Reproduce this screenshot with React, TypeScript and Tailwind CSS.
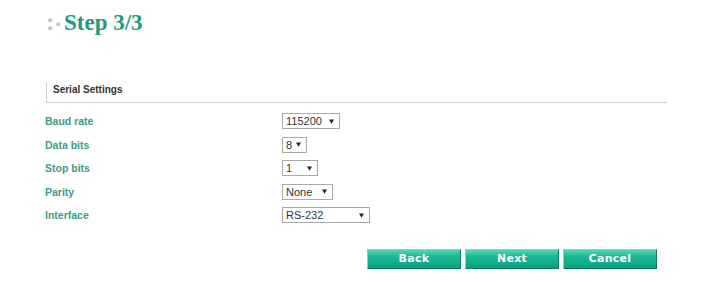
import React from "react";

const rows: { label: string; value: string; w: number }[] = [
  { label: "Baud rate", value: "115200", w: 58 },
  { label: "Data bits", value: "8", w: 25 },
  { label: "Stop bits", value: "1", w: 36 },
  { label: "Parity", value: "None", w: 51 },
  { label: "Interface", value: "RS-232", w: 88 },
];

function Select({ value, w }: { value: string; w: number }) {
  return (
    <div
      className="flex h-[16px] items-center justify-between border border-[#a9a9a9] bg-white pl-[3px] pr-[5px] text-[11px] leading-[14px] text-[#333]"
      style={{ width: w }}
    >
      <span>{value}</span>
      <svg width="5" height="5" viewBox="0 0 5 5" className="shrink-0">
        <polygon points="0,0.5 5,0.5 2.5,4.8" fill="#222" />
      </svg>
    </div>
  );
}

function Btn({ label }: { label: string }) {
  return (
    <button className="flex h-[20px] w-[94px] items-center justify-center border border-t-[#6fdcc4] border-l-[#6fdcc4] border-r-[#0a7a64] border-b-[#0a7a64] bg-[linear-gradient(#55d6b8_0%,#1bb994_35%,#12ad8a_70%,#0d9c7d_100%)] font-['DejaVu_Sans',sans-serif] text-[11px] font-bold tracking-[0.3px] text-white">
      {label}
    </button>
  );
}

export default function App() {
  return (
    <div className="h-[297px] w-[709px] bg-white font-['Liberation_Sans',Arial,sans-serif]">
      <div className="flex items-center pl-[48px] pt-[10px]">
        <svg width="13" height="13" viewBox="0 0 13 13" className="mt-[2px]">
          <circle cx="2.2" cy="2.2" r="2" fill="#c2c2c2" />
          <circle cx="2.2" cy="10.2" r="2" fill="#c2c2c2" />
          <circle cx="10.2" cy="6.2" r="2" fill="#c2c2c2" />
        </svg>
        <div className="ml-[3px] font-['Liberation_Serif',serif] text-[23px] font-bold leading-[26px] text-[#1e9a80]">
          Step 3/3
        </div>
      </div>

      <div className="ml-[46px] mr-[42px] mt-[46px] h-[21px] border-b border-l border-[#cccccc] pl-[6px] text-[10px] font-bold leading-[16px] text-[#333]">
        Serial Settings
      </div>

      <div className="mt-[6.5px] pl-[45px]">
        {rows.map((r) => (
          <div key={r.label} className="flex h-[23.5px] items-center">
            <div className="w-[237px] text-[10.5px] font-bold leading-[16px] text-[#3a9d86]">
              {r.label}
            </div>
            <Select value={r.value} w={r.w} />
          </div>
        ))}
      </div>

      <div className="mt-[22px] flex gap-[4px] pl-[367px]">
        <Btn label="Back" />
        <Btn label="Next" />
        <Btn label="Cancel" />
      </div>
    </div>
  );
}
